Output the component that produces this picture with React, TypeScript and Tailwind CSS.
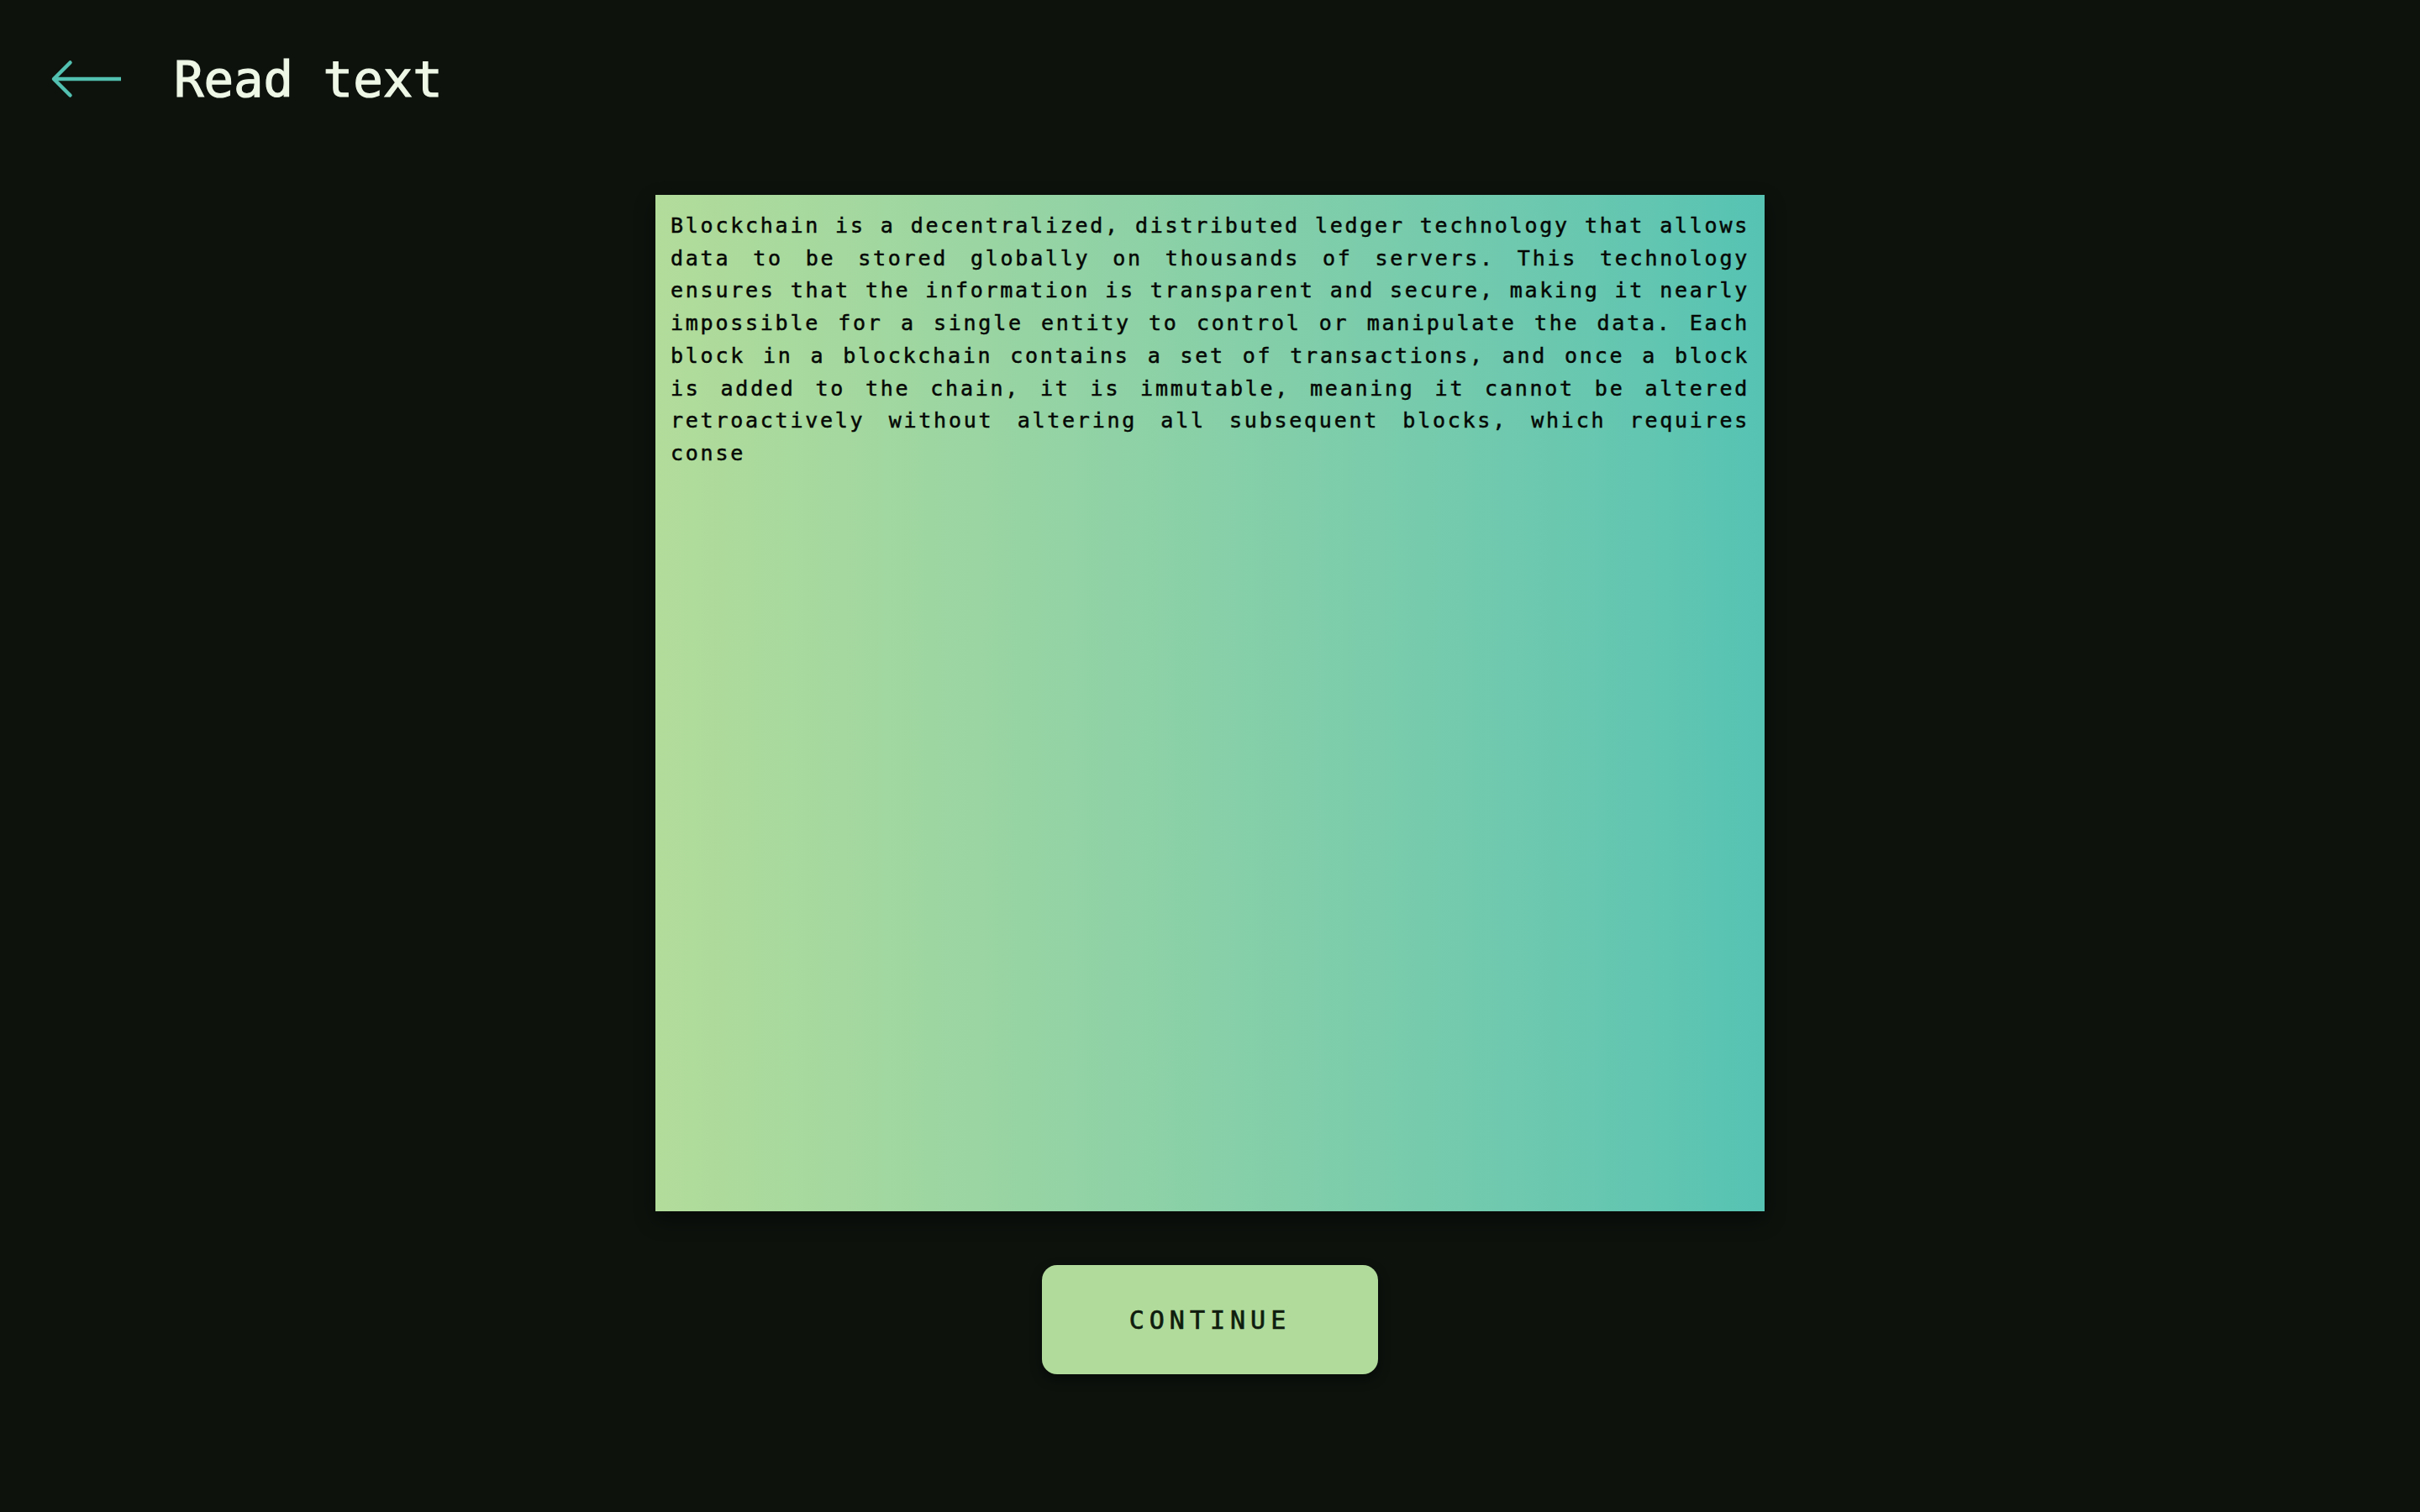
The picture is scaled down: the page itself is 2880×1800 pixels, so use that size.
import React from 'react'

const passage =
  'Blockchain is a decentralized, distributed ledger technology that allows data to be stored globally on thousands of servers. This technology ensures that the information is transparent and secure, making it nearly impossible for a single entity to control or manipulate the data. Each block in a blockchain contains a set of transactions, and once a block is added to the chain, it is immutable, meaning it cannot be altered retroactively without altering all subsequent blocks, which requires conse'

const BackArrow = () => (
  <svg width="90" height="50" viewBox="0 0 90 50" fill="none" className="shrink-0">
    <path d="M6 25 H86" stroke="#53c1b1" strokeWidth="4.5" strokeLinecap="butt" />
    <path
      d="M25.5 5.5 L6 25 L25.5 44.5"
      stroke="#53c1b1"
      strokeWidth="4.5"
      strokeLinecap="round"
      strokeLinejoin="round"
    />
  </svg>
)

export default function App() {
  return (
    <div
      className="min-h-screen w-full bg-[#0d120d]"
      style={{ fontFamily: '"DejaVu Sans Mono", "Liberation Mono", monospace' }}
    >
      <header className="flex h-[188px] items-center pl-[58px]">
        <button type="button" aria-label="Back" className="flex items-center">
          <BackArrow />
        </button>
        <h1 className="ml-[59px] text-[59px] font-normal leading-none text-[#eef7e6] [-webkit-text-stroke:1.2px_#eef7e6]">
          Read text
        </h1>
      </header>

      <main className="flex flex-col items-center pt-[44px]">
        <div className="h-[1210px] w-[1320px] bg-gradient-to-r from-[#b2dc9a] to-[#56c3b3] p-[18px] shadow-[0_10px_22px_rgba(0,0,0,0.45)]">
          <p className="text-justify text-[25px] leading-[38.7px] tracking-[0.11em] text-[#050805] [-webkit-text-stroke:0.5px_#050805]">
            {passage}
          </p>
        </div>

        <button
          type="button"
          className="mt-16 flex h-[130px] w-[400px] items-center justify-center rounded-[18px] bg-[#b0db9b] text-[30px] tracking-[0.2em] text-[#0f1c0e] shadow-[0_6px_14px_rgba(0,0,0,0.45)] [-webkit-text-stroke:0.7px_#0f1c0e]"
        >
          CONTINUE
        </button>
      </main>
    </div>
  )
}
